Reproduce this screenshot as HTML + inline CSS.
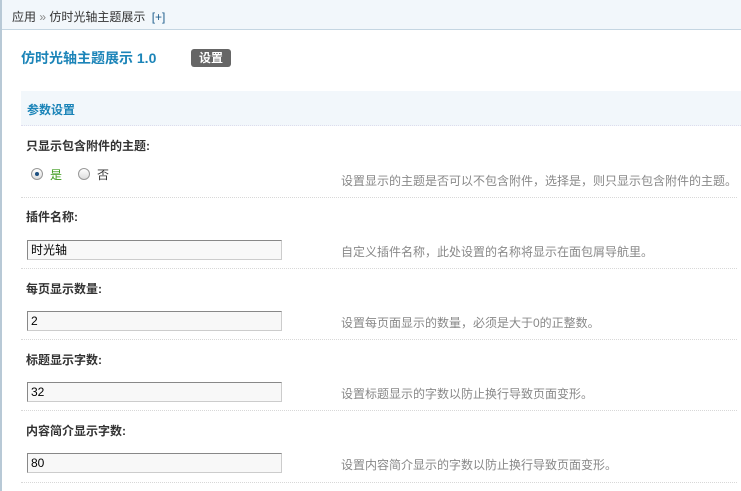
<!DOCTYPE html>
<html><head><meta charset="utf-8"><style>
*{margin:0;padding:0;box-sizing:border-box}
body{width:741px;height:491px;background:#fff;font-family:"Liberation Sans","Noto Sans CJK SC",sans-serif;font-size:12px;color:#333;position:relative;overflow:hidden}
.abs{position:absolute}
.lb{position:absolute;left:0;top:0;width:2px;height:491px;background:#b8c9d6}
.top{position:absolute;left:0;top:0;width:741px;height:30px;background:#f2f7fb;border-bottom:1px solid #c5d6e2}
.crumb{left:12px;top:8px;font-size:12px;color:#333}
.crumb .p{color:#1f5e8c;margin-left:3px}
.title{left:21px;top:48px;font-size:14px;font-weight:bold;color:#1b84b8}
.btn{left:191px;top:49px;width:40px;height:18px;background:#666;color:#fff;font-size:12px;font-weight:bold;text-align:center;line-height:18px;border-radius:3px}
.sec{left:21px;top:91px;width:720px;height:35px;background:#f2f7fb;border-bottom:1px dotted #dde;}
.sec span{position:absolute;left:6px;top:10px;font-weight:bold;color:#1b84b8;font-size:12px}
.lab{left:26px;font-weight:bold;font-size:12px;color:#333}
.inp{left:27px;width:255px;height:20px;border:1px solid #888;border-right-color:#ccc;border-bottom-color:#ccc;background:#f8f8f8;font-size:12px;padding-left:3px;line-height:18px;color:#000}
.desc{left:341px;color:#888;font-size:12px}
.dl{left:21px;width:716px;height:0;border-top:1px dotted #d8d8d8}
.r{width:12px;height:12px;border-radius:50%;border:1px solid #999;background:linear-gradient(#fff,#ddd)}
.r.on::after{content:"";position:absolute;left:3px;top:3px;width:4px;height:4px;border-radius:50%;background:#1c4f80}
</style></head><body>
<div class="top"></div>
<div class="lb"></div>
<div class="abs crumb">应用 <span style="color:#888">»</span> 仿时光轴主题展示 <span class="p">[+]</span></div>
<div class="abs title">仿时光轴主题展示 1.0</div>
<div class="abs btn">设置</div>
<div class="abs sec"><span>参数设置</span></div>

<div class="abs lab" style="top:137px">只显示包含附件的主题:</div>
<div class="abs r on" style="left:31px;top:168px"></div>
<div class="abs" style="left:50px;top:166px;color:#3a9a1a">是</div>
<div class="abs r" style="left:78px;top:168px"></div>
<div class="abs" style="left:97px;top:166px">否</div>
<div class="abs desc" style="top:172px">设置显示的主题是否可以不包含附件，选择是，则只显示包含附件的主题。</div>
<div class="abs dl" style="top:197px"></div>

<div class="abs lab" style="top:208px">插件名称:</div>
<div class="abs inp" style="top:240px">时光轴</div>
<div class="abs desc" style="top:243px">自定义插件名称，此处设置的名称将显示在面包屑导航里。</div>
<div class="abs dl" style="top:268px"></div>

<div class="abs lab" style="top:280px">每页显示数量:</div>
<div class="abs inp" style="top:311px">2</div>
<div class="abs desc" style="top:314px">设置每页面显示的数量，必须是大于0的正整数。</div>
<div class="abs dl" style="top:339px"></div>

<div class="abs lab" style="top:351px">标题显示字数:</div>
<div class="abs inp" style="top:382px">32</div>
<div class="abs desc" style="top:385px">设置标题显示的字数以防止换行导致页面变形。</div>
<div class="abs dl" style="top:410px"></div>

<div class="abs lab" style="top:422px">内容简介显示字数:</div>
<div class="abs inp" style="top:453px">80</div>
<div class="abs desc" style="top:456px">设置内容简介显示的字数以防止换行导致页面变形。</div>
<div class="abs dl" style="top:482px"></div>
</body></html>
